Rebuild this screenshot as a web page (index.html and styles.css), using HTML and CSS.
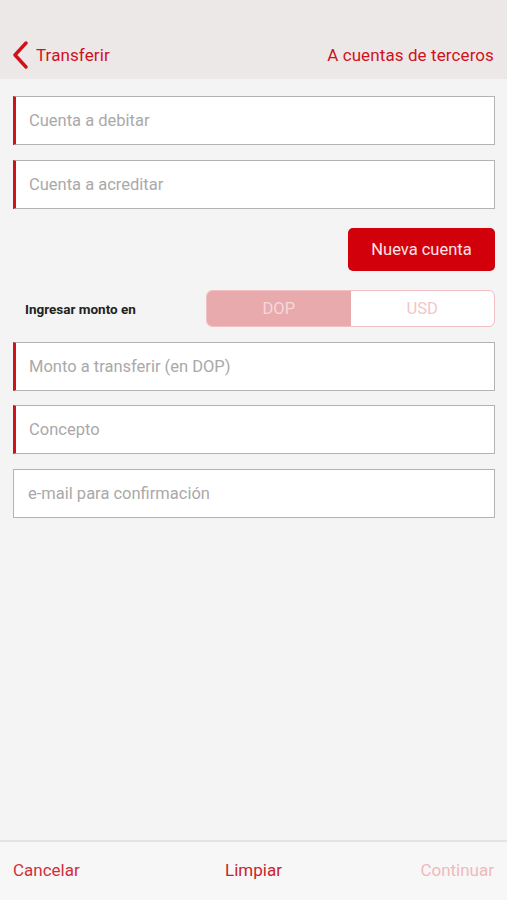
FILE: index.html
```html
<!DOCTYPE html>
<html lang="es">
<head>
<meta charset="utf-8">
<title>Transferir</title>
<link rel="stylesheet" href="styles.css">
</head>
<body>
<div class="app">
  <header class="header">
    <div class="nav">
      <div class="back">
        <svg class="chev" width="18" height="28" viewBox="0 0 18 28"><path d="M15 2 L4 14 L15 26" fill="none" stroke="#d0121b" stroke-width="3.4" stroke-linecap="round" stroke-linejoin="round"/></svg>
        <span class="back-label">Transferir</span>
      </div>
      <div class="title">A cuentas de terceros</div>
    </div>
  </header>
  <main class="content">
    <div class="field req"><span class="ph">Cuenta a debitar</span></div>
    <div class="field req"><span class="ph">Cuenta a acreditar</span></div>
    <div class="btn-row"><button class="btn">Nueva cuenta</button></div>
    <div class="amount-row">
      <span class="amount-label">Ingresar monto en</span>
      <div class="seg">
        <div class="seg-item active">DOP</div>
        <div class="seg-item">USD</div>
      </div>
    </div>
    <div class="field req tight"><span class="ph">Monto a transferir (en DOP)</span></div>
    <div class="field req"><span class="ph">Concepto</span></div>
    <div class="field"><span class="ph">e-mail para confirmación</span></div>
  </main>
  <footer class="footer">
    <span class="f-btn">Cancelar</span>
    <span class="f-btn mid">Limpiar</span>
    <span class="f-btn dim">Continuar</span>
  </footer>
</div>
</body>
</html>
```
FILE: styles.css
```css
* { box-sizing: border-box; }
html, body { margin: 0; padding: 0; }
body { font-family: Roboto, "Liberation Sans", sans-serif; background: #f4f4f4; }
.app { width: 507px; height: 900px; display: flex; flex-direction: column; }
.header { height: 79px; background: #ece8e7; padding-top: 30px; }
.nav { height: 49px; display: flex; align-items: center; justify-content: space-between; padding: 0 13px 0 11px; }
.back { display: flex; align-items: center; gap: 7px; }
.chev { display: block; }
.back-label, .title { color: #d0121b; font-size: 17px; letter-spacing: 0.1px; }
.content { flex: 1; padding: 17px 12px 0 13px; display: flex; flex-direction: column; }
.field { height: 49px; background: #fff; border: 1px solid #b3b3b3; display: flex; align-items: center; padding-left: 14px; margin-bottom: 15px; }
.field.tight { margin-bottom: 14px; }
.field.req { border-left: 3px solid #d0121b; padding-left: 13px; }
.ph { color: #a9a9a9; font-size: 16.5px; }
.btn-row { display: flex; justify-content: flex-end; margin-top: 4px; margin-bottom: 19px; }
.btn { width: 147px; height: 43px; background: #d2000b; color: #fde3e3; border: none; border-radius: 5px; font-family: inherit; font-size: 16.5px; padding: 0; }
.amount-row { display: flex; align-items: center; margin-bottom: 15px; }
.amount-label { width: 193px; padding-left: 12px; font-size: 13.5px; font-weight: 700; color: #222; }
.seg { flex: 1; height: 37px; display: flex; border: 1.5px solid #f0c0c2; border-radius: 6px; overflow: hidden; background: #fff; }
.seg-item { flex: 1; display: flex; align-items: center; justify-content: center; font-size: 16.5px; color: #f1c6c8; }
.seg-item.active { background: #e8aaac; color: #f6d8d9; }
.footer { height: 60px; border-top: 2px solid #e3e3e3; background: #f7f7f7; display: flex; align-items: center; justify-content: space-between; padding: 0 13px 2px; }
.f-btn { font-size: 17px; color: #d0303a; width: 90px; }
.f-btn.mid { text-align: center; color: #c8222c; }
.f-btn.dim { text-align: right; color: #f0b9bc; }
```
